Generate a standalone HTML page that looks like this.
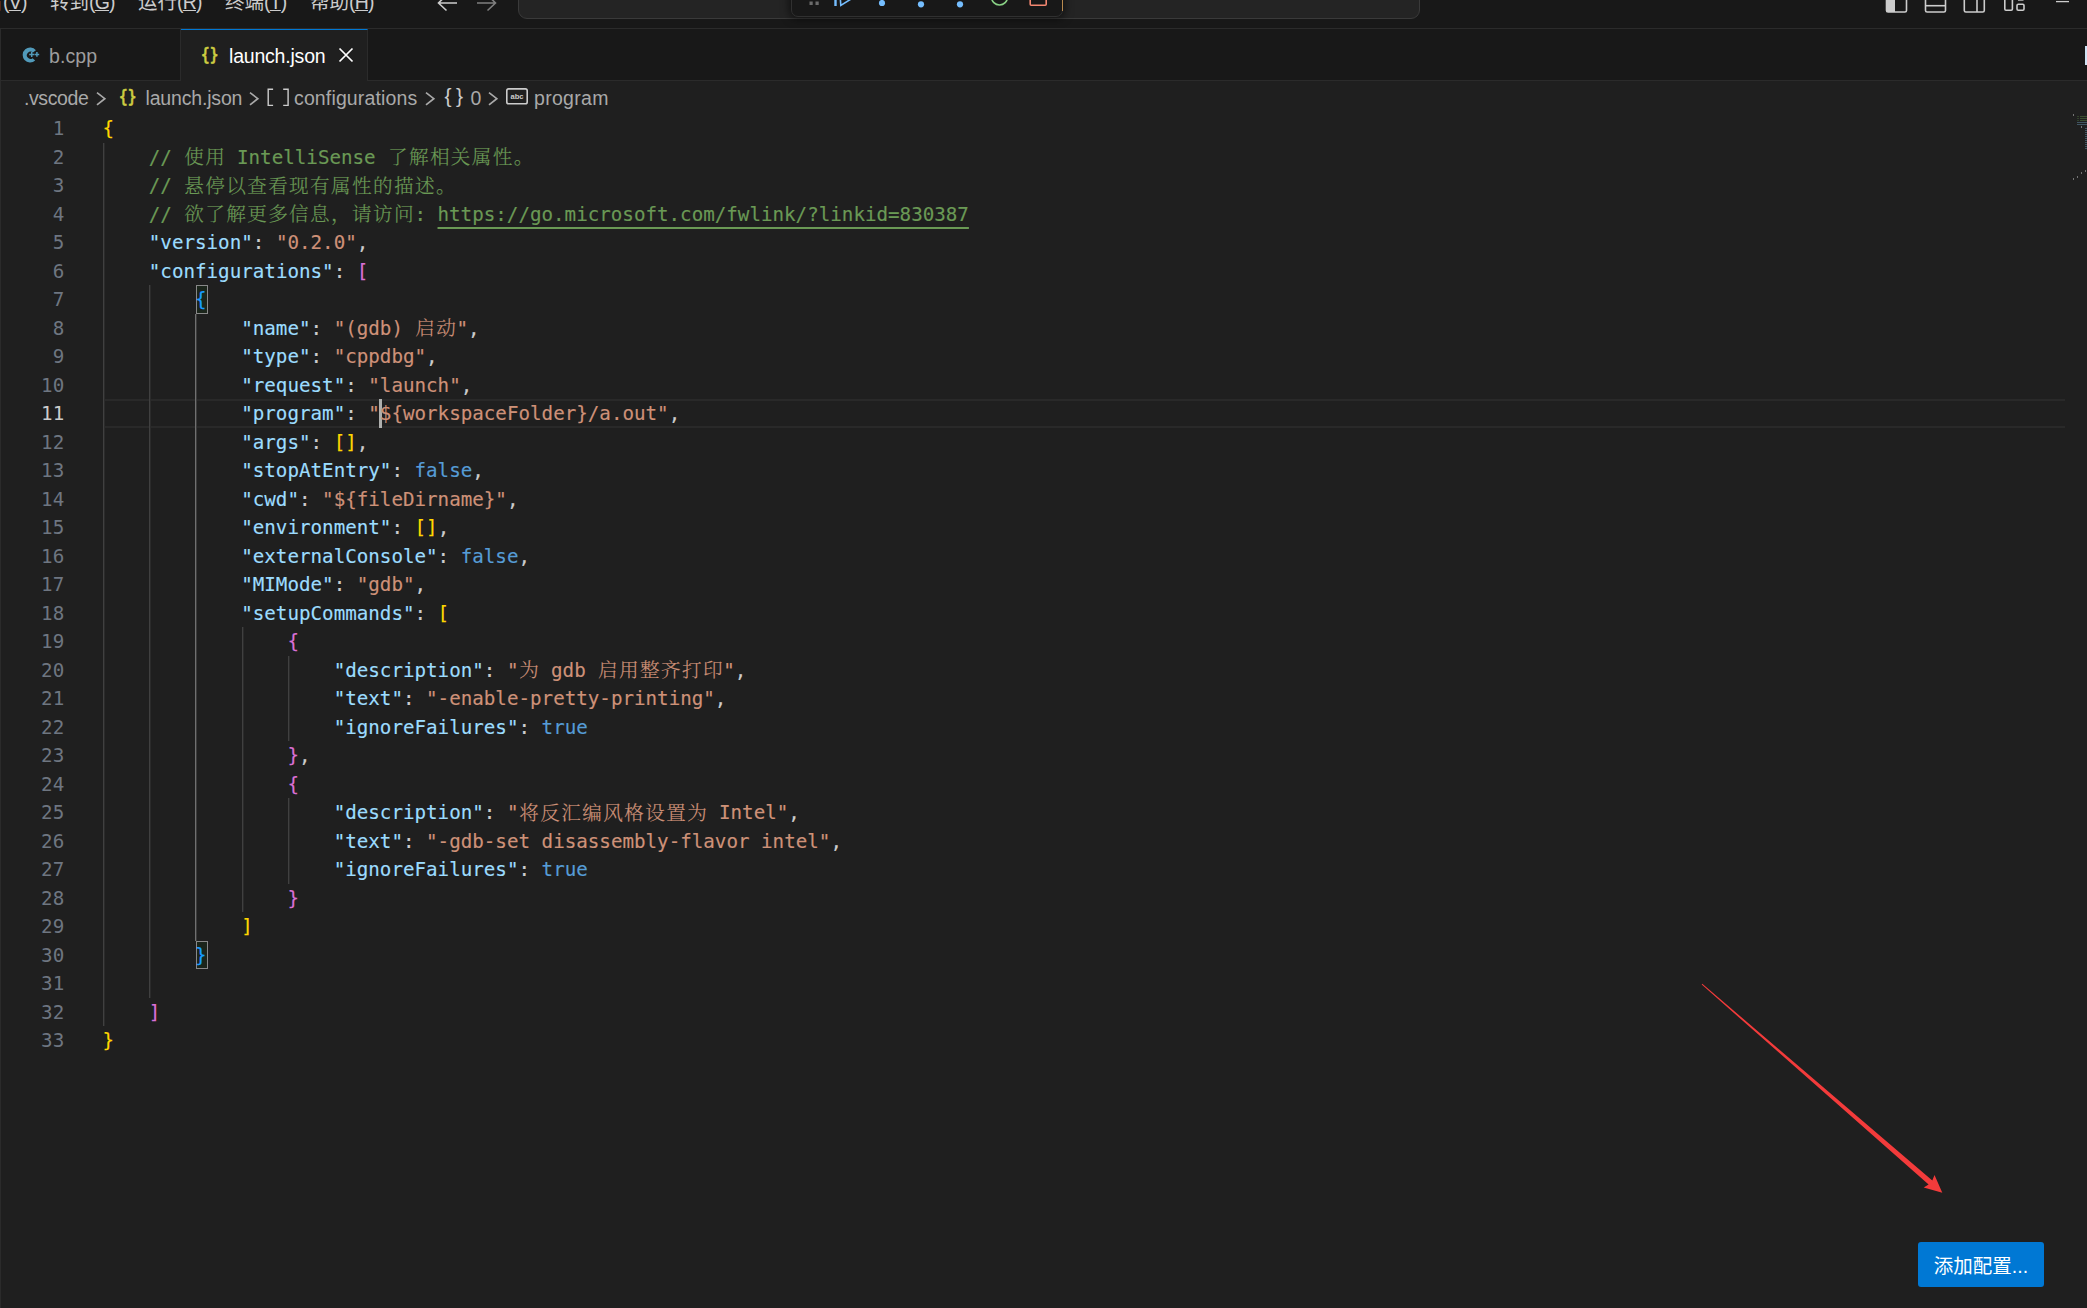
<!DOCTYPE html>
<html lang="zh-CN">
<head>
<meta charset="utf-8">
<title>launch.json</title>
<style>
*{box-sizing:border-box;margin:0;padding:0}
html,body{width:2087px;height:1308px;overflow:hidden;background:#1f1f1f}
body{position:relative;font-family:"Liberation Sans","Noto Sans CJK SC",sans-serif;color:#ccc}
.abs{position:absolute}
/* title bar */
#title{position:absolute;left:0;top:0;width:2087px;height:29px;background:#181818;border-bottom:1px solid #2b2b2b;overflow:hidden}
.menu{position:absolute;top:-11px;height:26px;line-height:26px;font-size:19.5px;color:#ccc;white-space:nowrap}
.menu u{text-decoration:underline;text-underline-offset:0.5px;text-decoration-thickness:1.2px}
.menu i{font-style:normal;letter-spacing:-0.8px}
#cmd{position:absolute;left:518px;top:-20px;width:902px;height:38.5px;border:1px solid #3a3a3a;border-radius:9px;background:#242424}
#dbg{position:absolute;left:791px;top:-30px;width:271.5px;height:47px;border:1px solid #303030;border-radius:7px;background:#181818;box-shadow:0 0 9px 2px rgba(0,0,0,.55)}
/* tabs */
#tabs{position:absolute;left:0;top:29px;width:2087px;height:52px;background:#181818;border-bottom:1px solid #2b2b2b}
#leftb{position:absolute;left:0;top:29px;width:1px;height:1279px;background:#2b2b2b}
.tab{position:absolute;top:0;height:52px;font-size:19.5px;line-height:52px;white-space:nowrap}
#tab1{left:1px;width:180px;border-right:1px solid #2b2b2b;border-bottom:1px solid #2b2b2b;color:#9d9d9d}
#tab2{left:181px;width:187px;background:#1f1f1f;border-right:1px solid #2b2b2b;border-top:1.5px solid #0078d4;color:#fff}
/* breadcrumbs */
#bc{position:absolute;left:1px;top:81px;width:2086px;height:33px;background:#1f1f1f;font-size:19.5px;line-height:33px;color:#a9a9a9;white-space:nowrap}
#bc span{position:absolute;top:1px}
/* editor */
#ed{position:absolute;left:0;top:114px;width:2087px;height:1194px}
.ln{position:absolute;left:0;width:64.2px;margin-top:1px;height:28.5px;line-height:28.5px;text-align:right;color:#6e7681;font-family:"DejaVu Sans Mono",monospace;font-size:19.2px;white-space:pre}
.ln.cur{color:#ccc}
.l{position:absolute;left:102.6px;margin-top:1px;-webkit-text-stroke:0.15px;height:28.5px;line-height:28.5px;font-family:"DejaVu Sans Mono","Noto Serif CJK SC",monospace;font-size:19.2px;white-space:pre;color:#ccc}
.l .z{font-family:"Noto Serif CJK SC",serif;font-size:19.6px;letter-spacing:1.4px;margin-left:.7px;margin-right:-.7px;line-height:0;font-weight:300;position:relative;top:.8px}
.k{color:#9cdcfe}.s{color:#ce9178}.c{color:#6a9955}.b{color:#569cd6}
.b1{color:#ffd700}.b2{color:#da70d6}.b3{color:#179fff}
.c u{text-decoration:underline;text-underline-offset:6px;text-decoration-thickness:1.5px}
.g{position:absolute;width:2px;background:linear-gradient(90deg,#404040 50%,#2b2b2b 50%)}
.g.a{background:linear-gradient(90deg,#707070 50%,#3c3c3c 50%)}
#mm{position:absolute;left:2073px;top:114px;width:14px;height:70px;overflow:hidden}
#mm i{position:absolute;height:1.3px;opacity:.62}
#mm i.t{height:2px;opacity:.9}
</style>
</head>
<body>
<div id="title">
<div class="menu" style="left:-36px">查看<i>(<u>V</u>)</i></div>
<div class="menu" style="left:50px">转到<i>(<u>G</u>)</i></div>
<div class="menu" style="left:138px">运行<i>(<u>R</u>)</i></div>
<div class="menu" style="left:225px">终端<i>(<u>T</u>)</i></div>
<div class="menu" style="left:310px">帮助<i>(<u>H</u>)</i></div>
<svg class="abs" style="left:430px;top:0" width="80" height="14" viewBox="0 0 80 14" fill="none" stroke-width="1.6" stroke-linecap="butt">
<path d="M27 3H8.5M17 -5.5L8.5 3L16.5 10.5" stroke="#ccc"/>
<path d="M47 3H65.5M57 -5.5L65.5 3L57.5 10.5" stroke="#7f7f7f"/>
</svg>
<div id="cmd"></div>
<div id="dbg"></div>
<svg class="abs" style="left:800px;top:0" width="270" height="16" viewBox="0 0 270 16">
<rect x="9.5" y="1.5" width="3.2" height="3.5" fill="#6b6b6b"/><rect x="15.5" y="1.5" width="3.2" height="3.5" fill="#6b6b6b"/>
<rect x="34.3" y="-2" width="2.4" height="8" fill="#75beff"/>
<path d="M40 -6L49.5 0L40.8 5.4Z" fill="none" stroke="#75beff" stroke-width="1.6"/>
<circle cx="82" cy="3" r="3.1" fill="#75beff"/>
<circle cx="121" cy="4.3" r="3.1" fill="#75beff"/>
<circle cx="160" cy="4.3" r="3.1" fill="#75beff"/>
<circle cx="199.5" cy="-3" r="8" fill="none" stroke="#89d185" stroke-width="1.6"/>
<rect x="230.2" y="-10" width="16" height="15.3" rx="1" fill="none" stroke="#f48771" stroke-width="1.6"/>
<rect x="262" y="0" width="1" height="11" fill="#b98a4e"/>
</svg>
<svg class="abs" style="left:1880px;top:0" width="200" height="16" viewBox="0 0 200 16" fill="none" stroke="#ccc" stroke-width="1.6">
<rect x="6.5" y="-6" width="20" height="18" rx="1.6"/><rect x="6.5" y="-6" width="8.5" height="18" fill="#ccc" stroke="none"/>
<rect x="45.5" y="-6" width="20" height="18" rx="1.6"/><path d="M45.5 5.7H65.5"/>
<rect x="84.3" y="-6" width="20" height="18" rx="1.6"/><path d="M97 -6V12"/>
<rect x="124.8" y="-6" width="7.6" height="16.2" rx="1.2"/><rect x="137" y="4.2" width="7" height="6" rx="1.2"/><path d="M138 0.2H143.5" stroke-width="1"/>
<path d="M176 1.6H189" stroke-width="1.3"/>
</svg>
</div>
<div id="tabs">
<div class="tab" id="tab1">
<svg class="abs" style="left:19px;top:14px" width="24" height="24" viewBox="0 0 24 24"><path d="M15.2 17.6A7.5 7.5 0 1 1 15.9 7.2L12.9 9.6A3.6 3.6 0 1 0 12.6 15.2Z" fill="#519aba"/><path d="M9.2 11.4h5M11.7 8.9v5M14.6 11.4h4.6M16.9 9.1v4.6" stroke="#519aba" stroke-width="1.5" fill="none"/></svg>
<span class="abs" style="left:48px;top:1px;letter-spacing:0.1px">b.cpp</span></div>
<div class="tab" id="tab2">
<span class="abs" style="left:19.5px;top:-1.5px;font-family:'DejaVu Sans Mono',monospace;font-weight:bold;font-size:17.5px;color:#cbcb41;-webkit-text-stroke:0.35px #cbcb41;transform:scaleX(.82);transform-origin:0 50%">{}</span>
<span class="abs" style="left:48px;top:-0.5px;letter-spacing:-0.2px">launch.json</span>
<svg class="abs" style="left:156px;top:15.7px" width="18" height="18" viewBox="0 0 18 18"><path d="M2.5 2.5L15.5 15.5M15.5 2.5L2.5 15.5" stroke="#fff" stroke-width="1.7" fill="none"/></svg>
</div>
<div class="abs" style="left:2085px;top:17px;width:2px;height:19px;background:#cfe3f5"></div>
</div>
<div id="leftb"></div>
<div id="bc">
<span style="left:23px;letter-spacing:-0.4px">.vscode</span>
<svg class="abs" style="left:94px;top:8px" width="14" height="18" viewBox="0 0 14 18"><path d="M2 3.6L9.8 9.7L2 15.8" stroke="#a9a9a9" stroke-width="1.7" fill="none"/></svg>
<span style="left:117.5px;top:-0.5px;font-family:'DejaVu Sans Mono',monospace;font-weight:bold;font-size:17.5px;color:#cbcb41;-webkit-text-stroke:0.35px #cbcb41;transform:scaleX(.82);transform-origin:0 50%">{}</span>
<span style="left:144.5px;letter-spacing:-0.17px">launch.json</span>
<svg class="abs" style="left:247px;top:8px" width="14" height="18" viewBox="0 0 14 18"><path d="M2 3.6L9.8 9.7L2 15.8" stroke="#a9a9a9" stroke-width="1.7" fill="none"/></svg>
<svg class="abs" style="left:264px;top:6px" width="28" height="22" viewBox="0 0 28 22"><path d="M8.1 2.2H3.2V18.4H8.1M18.2 2.2H23.1V18.4H18.2" stroke="#ccc" stroke-width="1.4" fill="none"/></svg>
<span style="left:293px;letter-spacing:0.14px">configurations</span>
<svg class="abs" style="left:423px;top:8px" width="14" height="18" viewBox="0 0 14 18"><path d="M2 3.6L9.8 9.7L2 15.8" stroke="#a9a9a9" stroke-width="1.7" fill="none"/></svg>
<span style="left:443.5px;top:-2.5px;font-family:'Liberation Sans',sans-serif;font-size:21px;color:#ccc;letter-spacing:4.5px">{}</span>
<span style="left:469.5px">0</span>
<svg class="abs" style="left:486px;top:8px" width="14" height="18" viewBox="0 0 14 18"><path d="M2 3.6L9.8 9.7L2 15.8" stroke="#a9a9a9" stroke-width="1.7" fill="none"/></svg>
<svg class="abs" style="left:504px;top:6px" width="26" height="20" viewBox="0 0 26 20"><rect x="1.8" y="1.9" width="20.4" height="14.8" rx="1.8" stroke="#ccc" stroke-width="1.6" fill="none"/><text x="12" y="11.9" font-family="Liberation Sans, sans-serif" font-weight="bold" font-size="7.6" fill="#ccc" text-anchor="middle">abc</text></svg>
<span style="left:533px;letter-spacing:0.3px">program</span>
</div>
<div id="ed">
<div class="abs" style="left:104px;top:285.0px;width:1961px;height:28.5px;border-top:2px solid #292929;border-bottom:2px solid #292929" id="cl"></div>
<div class="g" style="left:103px;top:28.5px;height:883.5px"></div>
<div class="g" style="left:149px;top:171.0px;height:712.5px"></div>
<div class="g a" style="left:195px;top:199.5px;height:627.0px"></div>
<div class="g" style="left:242px;top:513.0px;height:285.0px"></div>
<div class="g" style="left:288px;top:541.5px;height:85.5px"></div>
<div class="g" style="left:288px;top:684.0px;height:85.5px"></div>
<div class="abs" style="left:196px;top:171px;width:12.3px;height:28.7px;border:1px solid #888;background:rgba(0,100,0,.1)"></div>
<div class="abs" style="left:196px;top:826.5px;width:12.3px;height:28.7px;border:1px solid #888;background:rgba(0,100,0,.1)"></div>
<div class="abs" style="left:378.5px;top:285.0px;width:3px;height:28.5px;background:#aeafad"></div>
<div class="ln" style="top:0.0px">1</div>
<div class="l" style="top:0.0px"><span class="b1">{</span></div>
<div class="ln" style="top:28.5px">2</div>
<div class="l" style="top:28.5px">    <span class="c">// <span class="z">使用</span> IntelliSense <span class="z">了解相关属性。</span></span></div>
<div class="ln" style="top:57.0px">3</div>
<div class="l" style="top:57.0px">    <span class="c">// <span class="z">悬停以查看现有属性的描述。</span></span></div>
<div class="ln" style="top:85.5px">4</div>
<div class="l" style="top:85.5px">    <span class="c">// <span class="z">欲了解更多信息，请访问</span>: <u>https://go.microsoft.com/fwlink/?linkid=830387</u></span></div>
<div class="ln" style="top:114.0px">5</div>
<div class="l" style="top:114.0px">    <span class="k">"version"</span>: <span class="s">"0.2.0"</span>,</div>
<div class="ln" style="top:142.5px">6</div>
<div class="l" style="top:142.5px">    <span class="k">"configurations"</span>: <span class="b2">[</span></div>
<div class="ln" style="top:171.0px">7</div>
<div class="l" style="top:171.0px">        <span class="b3">{</span></div>
<div class="ln" style="top:199.5px">8</div>
<div class="l" style="top:199.5px">            <span class="k">"name"</span>: <span class="s">"(gdb) <span class="z">启动</span>"</span>,</div>
<div class="ln" style="top:228.0px">9</div>
<div class="l" style="top:228.0px">            <span class="k">"type"</span>: <span class="s">"cppdbg"</span>,</div>
<div class="ln" style="top:256.5px">10</div>
<div class="l" style="top:256.5px">            <span class="k">"request"</span>: <span class="s">"launch"</span>,</div>
<div class="ln cur" style="top:285.0px">11</div>
<div class="l" style="top:285.0px">            <span class="k">"program"</span>: <span class="s">"${workspaceFolder}/a.out"</span>,</div>
<div class="ln" style="top:313.5px">12</div>
<div class="l" style="top:313.5px">            <span class="k">"args"</span>: <span class="b1">[]</span>,</div>
<div class="ln" style="top:342.0px">13</div>
<div class="l" style="top:342.0px">            <span class="k">"stopAtEntry"</span>: <span class="b">false</span>,</div>
<div class="ln" style="top:370.5px">14</div>
<div class="l" style="top:370.5px">            <span class="k">"cwd"</span>: <span class="s">"${fileDirname}"</span>,</div>
<div class="ln" style="top:399.0px">15</div>
<div class="l" style="top:399.0px">            <span class="k">"environment"</span>: <span class="b1">[]</span>,</div>
<div class="ln" style="top:427.5px">16</div>
<div class="l" style="top:427.5px">            <span class="k">"externalConsole"</span>: <span class="b">false</span>,</div>
<div class="ln" style="top:456.0px">17</div>
<div class="l" style="top:456.0px">            <span class="k">"MIMode"</span>: <span class="s">"gdb"</span>,</div>
<div class="ln" style="top:484.5px">18</div>
<div class="l" style="top:484.5px">            <span class="k">"setupCommands"</span>: <span class="b1">[</span></div>
<div class="ln" style="top:513.0px">19</div>
<div class="l" style="top:513.0px">                <span class="b2">{</span></div>
<div class="ln" style="top:541.5px">20</div>
<div class="l" style="top:541.5px">                    <span class="k">"description"</span>: <span class="s">"<span class="z">为</span> gdb <span class="z">启用整齐打印</span>"</span>,</div>
<div class="ln" style="top:570.0px">21</div>
<div class="l" style="top:570.0px">                    <span class="k">"text"</span>: <span class="s">"-enable-pretty-printing"</span>,</div>
<div class="ln" style="top:598.5px">22</div>
<div class="l" style="top:598.5px">                    <span class="k">"ignoreFailures"</span>: <span class="b">true</span></div>
<div class="ln" style="top:627.0px">23</div>
<div class="l" style="top:627.0px">                <span class="b2">}</span>,</div>
<div class="ln" style="top:655.5px">24</div>
<div class="l" style="top:655.5px">                <span class="b2">{</span></div>
<div class="ln" style="top:684.0px">25</div>
<div class="l" style="top:684.0px">                    <span class="k">"description"</span>: <span class="s">"<span class="z">将反汇编风格设置为</span> Intel"</span>,</div>
<div class="ln" style="top:712.5px">26</div>
<div class="l" style="top:712.5px">                    <span class="k">"text"</span>: <span class="s">"-gdb-set disassembly-flavor intel"</span>,</div>
<div class="ln" style="top:741.0px">27</div>
<div class="l" style="top:741.0px">                    <span class="k">"ignoreFailures"</span>: <span class="b">true</span></div>
<div class="ln" style="top:769.5px">28</div>
<div class="l" style="top:769.5px">                <span class="b2">}</span></div>
<div class="ln" style="top:798.0px">29</div>
<div class="l" style="top:798.0px">            <span class="b1">]</span></div>
<div class="ln" style="top:826.5px">30</div>
<div class="l" style="top:826.5px">        <span class="b3">}</span></div>
<div class="ln" style="top:855.0px">31</div>
<div class="ln" style="top:883.5px">32</div>
<div class="l" style="top:883.5px">    <span class="b2">]</span></div>
<div class="ln" style="top:912.0px">33</div>
<div class="l" style="top:912.0px"><span class="b1">}</span></div>
</div>
<svg class="abs" style="left:1690px;top:970px" width="270" height="240" viewBox="0 0 270 240"><path d="M11.7 14.6L238.6 214.6L233.7 217.5L252.3 222.8L244.5 205.1L242.3 210.4L12.3 13.8Z" fill="#f33b3b"/></svg>
<div class="abs" style="left:1918px;top:1242px;width:126px;height:45px;background:#0078d4;border-radius:3px;color:#fff;font-size:19.5px;line-height:48.5px;text-align:center;font-family:'Liberation Sans','Noto Sans CJK SC',sans-serif;white-space:nowrap">添加配置...</div>
<div id="mm"><i style="left:0px;top:0px;width:1px;background:#7d7d7d" class="t"></i><i style="left:4px;top:2px;width:2px;background:#3f5833"></i><i style="left:7px;top:2px;width:7px;background:#4c6c3a"></i><i style="left:4px;top:4px;width:2px;background:#3f5833"></i><i style="left:7px;top:4px;width:7px;background:#4c6c3a"></i><i style="left:4px;top:6px;width:2px;background:#3f5833"></i><i style="left:7px;top:6px;width:7px;background:#4c6c3a"></i><i style="left:4px;top:8px;width:10px;background:#55788c"></i><i style="left:4px;top:10px;width:10px;background:#55788c"></i><i style="left:8px;top:12px;width:1px;background:#7d7d7d" class="t"></i><i style="left:12px;top:14px;width:2px;background:#55788c"></i><i style="left:12px;top:16px;width:2px;background:#55788c"></i><i style="left:12px;top:18px;width:2px;background:#55788c"></i><i style="left:12px;top:20px;width:2px;background:#55788c"></i><i style="left:12px;top:22px;width:2px;background:#55788c"></i><i style="left:12px;top:24px;width:2px;background:#55788c"></i><i style="left:12px;top:26px;width:2px;background:#55788c"></i><i style="left:12px;top:28px;width:2px;background:#55788c"></i><i style="left:12px;top:30px;width:2px;background:#55788c"></i><i style="left:12px;top:32px;width:2px;background:#55788c"></i><i style="left:12px;top:34px;width:2px;background:#55788c"></i><i style="left:12px;top:56px;width:1px;background:#7d7d7d" class="t"></i><i style="left:8px;top:58px;width:1px;background:#7d7d7d" class="t"></i><i style="left:4px;top:62px;width:1px;background:#7d7d7d" class="t"></i><i style="left:0px;top:64px;width:1px;background:#7d7d7d" class="t"></i></div>
</body>
</html>
